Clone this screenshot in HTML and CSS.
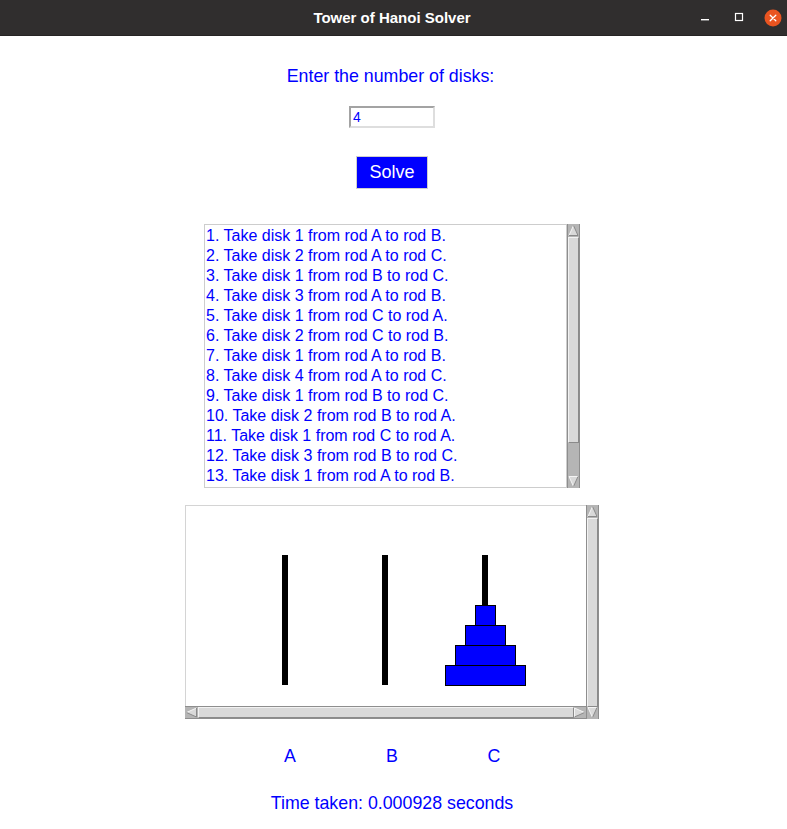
FILE: index.html
```html
<!DOCTYPE html>
<html lang="en">
<head>
<meta charset="utf-8">
<title>Tower of Hanoi Solver</title>
<link rel="stylesheet" href="styles.css">
</head>
<body>
<div class="window">
  <header class="titlebar">
    <span class="title">Tower of Hanoi Solver</span>
    <div class="controls">
      <svg class="ctl" viewBox="0 0 18 18"><rect x="5" y="10" width="8" height="1.4" fill="#ffffff"/></svg>
      <svg class="ctl" viewBox="0 0 18 18"><rect x="5.5" y="4.5" width="7" height="7" fill="none" stroke="#ffffff" stroke-width="1.2"/></svg>
      <svg class="ctl" viewBox="0 0 18 18"><circle cx="9" cy="9" r="8.5" fill="#e95420"/><path d="M6.2 6.2 L11.8 11.8 M11.8 6.2 L6.2 11.8" stroke="#ffffff" stroke-width="1.3" stroke-linecap="round"/></svg>
    </div>
  </header>
  <main class="app">
    <div class="prompt">Enter the number of disks:</div>
    <input class="entry" type="text" value="4">
    <button class="solve" type="button">Solve</button>

    <div class="listframe">
      <ul class="moves">
        <li>1. Take disk 1 from rod A to rod B.</li>
        <li>2. Take disk 2 from rod A to rod C.</li>
        <li>3. Take disk 1 from rod B to rod C.</li>
        <li>4. Take disk 3 from rod A to rod B.</li>
        <li>5. Take disk 1 from rod C to rod A.</li>
        <li>6. Take disk 2 from rod C to rod B.</li>
        <li>7. Take disk 1 from rod A to rod B.</li>
        <li>8. Take disk 4 from rod A to rod C.</li>
        <li>9. Take disk 1 from rod B to rod C.</li>
        <li>10. Take disk 2 from rod B to rod A.</li>
        <li>11. Take disk 1 from rod C to rod A.</li>
        <li>12. Take disk 3 from rod B to rod C.</li>
        <li>13. Take disk 1 from rod A to rod B.</li>
      </ul>
      <div class="vsb">
        <svg class="arrow" viewBox="0 0 11 13"><polygon points="5.5,1.5 10,11.5 1,11.5" fill="#d9d9d9"/><polyline points="1,11.5 5.5,1.5" fill="none" stroke="#f4f4f4"/><polyline points="5.5,1.5 10,11.5 1,11.5" fill="none" stroke="#8a8a8a"/></svg>
        <div class="thumb list-thumb"></div>
        <div class="trough"></div>
        <svg class="arrow" viewBox="0 0 11 12"><polygon points="1,0.5 10,0.5 5.5,10.5" fill="#d9d9d9"/><polyline points="10,0.5 1,0.5 5.5,10.5" fill="none" stroke="#f4f4f4"/><polyline points="10,0.5 5.5,10.5" fill="none" stroke="#8a8a8a"/></svg>
      </div>
    </div>

    <div class="canvasframe">
      <div class="canvas">
        <svg class="board" width="400" height="200" viewBox="0 0 400 200">
          <rect x="96" y="49" width="6" height="130" fill="#000000"/>
          <rect x="196" y="49" width="6" height="130" fill="#000000"/>
          <rect x="296" y="49" width="6" height="130" fill="#000000"/>
          <rect x="289.5" y="99.5" width="20" height="20" fill="#0000ff" stroke="#000000"/>
          <rect x="279.5" y="119.5" width="40" height="20" fill="#0000ff" stroke="#000000"/>
          <rect x="269.5" y="139.5" width="60" height="20" fill="#0000ff" stroke="#000000"/>
          <rect x="259.5" y="159.5" width="80" height="20" fill="#0000ff" stroke="#000000"/>
        </svg>
      </div>
      <div class="vsb canvas-vsb">
        <svg class="arrow" viewBox="0 0 11 13"><polygon points="5.5,1.5 10,11.5 1,11.5" fill="#d9d9d9"/><polyline points="1,11.5 5.5,1.5" fill="none" stroke="#f4f4f4"/><polyline points="5.5,1.5 10,11.5 1,11.5" fill="none" stroke="#8a8a8a"/></svg>
        <div class="thumb fill"></div>
        <svg class="arrow" viewBox="0 0 11 12"><polygon points="1,0.5 10,0.5 5.5,10.5" fill="#d9d9d9"/><polyline points="10,0.5 1,0.5 5.5,10.5" fill="none" stroke="#f4f4f4"/><polyline points="10,0.5 5.5,10.5" fill="none" stroke="#8a8a8a"/></svg>
      </div>
      <div class="hsb">
        <svg class="harrow" viewBox="0 0 13 11"><polygon points="1.5,5.5 11.5,1 11.5,10" fill="#d9d9d9"/><polyline points="11.5,1 1.5,5.5" fill="none" stroke="#f4f4f4"/><polyline points="1.5,5.5 11.5,10 11.5,1" fill="none" stroke="#8a8a8a"/></svg>
        <div class="thumb fill"></div>
        <svg class="harrow" viewBox="0 0 12 11"><polygon points="10.5,5.5 0.5,1 0.5,10" fill="#d9d9d9"/><polyline points="0.5,10 0.5,1 10.5,5.5" fill="none" stroke="#f4f4f4"/><polyline points="10.5,5.5 0.5,10" fill="none" stroke="#8a8a8a"/></svg>
      </div>
    </div>

    <div class="rodlabels"><span>A</span><span>B</span><span>C</span></div>
    <div class="time">Time taken: 0.000928 seconds</div>
  </main>
</div>
</body>
</html>
```

FILE: styles.css
```css
html, body {
  margin: 0;
  padding: 0;
  background: #ffffff;
}

body {
  font-family: "Liberation Sans", Arial, sans-serif;
}

.window {
  width: 787px;
  height: 829px;
  overflow: hidden;
  background: #ffffff;
}

.titlebar {
  height: 36px;
  box-sizing: border-box;
  background: #302e2e;
  border-bottom: 1px solid #262424;
  display: grid;
  grid-template-columns: 1fr auto 1fr;
  align-items: center;
  color: #ffffff;
}

.title {
  grid-column: 2;
  font-weight: bold;
  font-size: 15px;
  padding-right: 3px;
}

.controls {
  grid-column: 3;
  justify-self: end;
  display: flex;
  align-items: center;
  gap: 16px;
  padding-right: 5px;
}

.ctl {
  width: 18px;
  height: 18px;
  display: block;
}

.app {
  display: flex;
  flex-direction: column;
  align-items: center;
  color: #0000ff;
  padding-right: 3px;
}

.prompt {
  margin-top: 30px;
  font-size: 17.8px;
  line-height: 20px;
  padding-right: 3px;
}

.entry {
  margin-top: 20px;
  width: 86px;
  height: 22px;
  box-sizing: border-box;
  padding: 0 0 0 2px;
  border: 2px solid;
  border-color: #a3a3a3 #dedede #dedede #a3a3a3;
  font-family: "Liberation Sans", Arial, sans-serif;
  font-size: 14px;
  color: #0000ff;
  background: #ffffff;
  outline: none;
}

.solve {
  margin-top: 28px;
  width: 72px;
  height: 33px;
  box-sizing: border-box;
  border: 1px solid #cfcfcf;
  background: #0000ff;
  color: #ffffff;
  font-family: "Liberation Sans", Arial, sans-serif;
  font-size: 18px;
  padding: 0;
}

.listframe {
  margin-top: 35px;
  display: flex;
  height: 264px;
}

.moves {
  width: 363px;
  height: 264px;
  box-sizing: border-box;
  margin: 0;
  padding: 1px 0 0 1px;
  list-style: none;
  border: 1px solid #cdcdcd;
  overflow: hidden;
  font-size: 16px;
  line-height: 20px;
  white-space: nowrap;
}

.vsb {
  width: 13px;
  box-sizing: border-box;
  display: flex;
  flex-direction: column;
  background: #b5b5b5;
  border-left: 1px solid #8e8e8e;
  border-right: 1px solid #8e8e8e;
}

.arrow {
  display: block;
  width: 11px;
  flex: none;
}

.vsb .arrow:first-child {
  height: 13px;
}

.vsb .arrow:last-child {
  height: 12px;
}

.thumb {
  background: #d9d9d9;
  box-sizing: border-box;
  border: 1px solid;
  border-color: #f2f2f2 #8a8a8a #8a8a8a #f2f2f2;
}

.list-thumb {
  height: 206px;
  flex: none;
}

.trough {
  flex: 1;
}

.thumb.fill {
  flex: 1;
}

.canvasframe {
  margin-top: 17px;
  display: grid;
  grid-template-columns: 401px 13px;
  grid-template-rows: 201px 13px;
  width: 414px;
  height: 214px;
}

.canvas {
  grid-column: 1;
  grid-row: 1;
  box-sizing: border-box;
  border-top: 1px solid #d4d4d4;
  border-left: 1px solid #d4d4d4;
  background: #ffffff;
  overflow: hidden;
}

.board {
  display: block;
}

.canvas-vsb {
  grid-column: 2;
  grid-row: 1 / span 2;
}

.hsb {
  grid-column: 1;
  grid-row: 2;
  display: flex;
  flex-direction: row;
  box-sizing: border-box;
  background: #b5b5b5;
  border-top: 1px solid #8e8e8e;
  border-bottom: 1px solid #8e8e8e;
}

.harrow {
  display: block;
  height: 11px;
  flex: none;
}

.hsb .harrow:first-child {
  width: 13px;
}

.hsb .harrow:last-child {
  width: 12px;
}

.rodlabels {
  margin-top: 27px;
  display: flex;
  font-size: 17.8px;
  line-height: 20px;
}

.rodlabels span {
  width: 102px;
  text-align: center;
}

.time {
  margin-top: 27px;
  font-size: 17.8px;
  line-height: 20px;
}
```
